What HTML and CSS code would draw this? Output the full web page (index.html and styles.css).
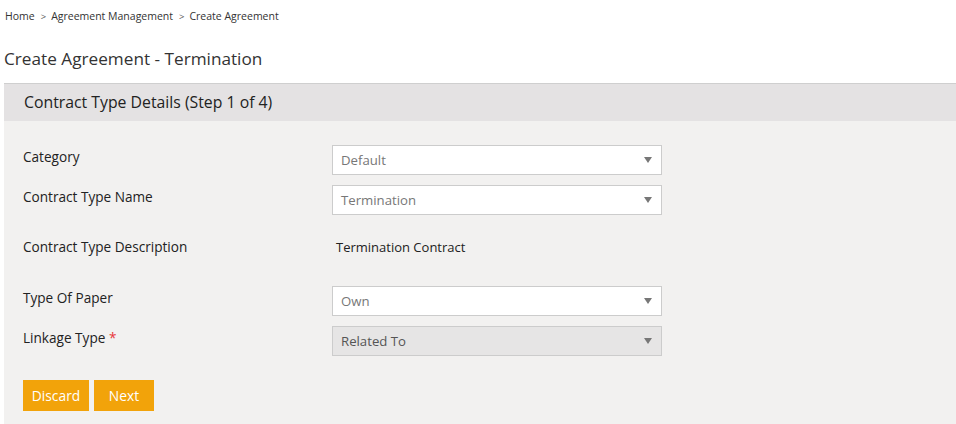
FILE: index.html
```html
<!DOCTYPE html>
<html>
<head>
<meta charset="utf-8">
<link rel="stylesheet" href="styles.css">
</head>
<body>
<div class="breadcrumb">
  <span>Home</span><span class="sep">&gt;</span><span>Agreement Management</span><span class="sep">&gt;</span><span>Create Agreement</span>
</div>
<h1 class="title">Create Agreement - Termination</h1>
<div class="panel">
  <div class="panel-head">Contract Type Details (Step 1 of 4)</div>
  <div class="panel-body">
    <div class="row">
      <div class="label">Category</div>
      <div class="select"><span>Default</span><span class="caret"></span></div>
    </div>
    <div class="row">
      <div class="label">Contract Type Name</div>
      <div class="select"><span>Termination</span><span class="caret"></span></div>
    </div>
    <div class="row desc">
      <div class="label">Contract Type Description</div>
      <div class="value">Termination Contract</div>
    </div>
    <div class="row">
      <div class="label">Type Of Paper</div>
      <div class="select"><span>Own</span><span class="caret"></span></div>
    </div>
    <div class="row">
      <div class="label">Linkage Type <span class="req">*</span></div>
      <div class="select disabled"><span>Related To</span><span class="caret"></span></div>
    </div>
    <div class="actions">
      <button class="btn btn-discard">Discard</button>
      <button class="btn btn-next">Next</button>
    </div>
  </div>
</div>
</body>
</html>
```
FILE: styles.css
```css
html, body {
  margin: 0;
  padding: 0;
  background: #fff;
  font-family: "Open Sans", "Noto Sans", sans-serif;
  color: #333;
}
.breadcrumb {
  font-size: 10.5px;
  line-height: 16px;
  padding: 8px 0 0 5px;
  color: #333;
}
.breadcrumb .sep {
  margin: 0 5px 0 6px;
  color: #555;
  font-size: 9.5px;
}
.title {
  font-size: 17.2px;
  font-weight: 400;
  line-height: 24px;
  margin: 22px 0 0 4px;
  color: #333;
}
.panel {
  margin: 12px 0 0 4px;
  border-top: 1px solid #cfcfcf;
}
.panel-head {
  background: #e4e2e3;
  height: 37px;
  line-height: 37px;
  padding-left: 20px;
  font-size: 15.8px;
  color: #222;
}
.panel-body {
  background: #f2f1f0;
  padding: 24px 0 13px 19px;
}
.row {
  display: flex;
  align-items: flex-start;
  margin-bottom: 10px;
}
.label {
  width: 309px;
  font-size: 13.6px;
  line-height: 20px;
  padding-top: 2px;
  color: #222;
}
.req { color: #e8363a; }
.select {
  box-sizing: border-box;
  width: 330px;
  height: 30px;
  background: #fff;
  border: 1px solid #ccc;
  display: flex;
  align-items: center;
  justify-content: space-between;
  padding: 0 9px 0 8px;
  font-size: 13.2px;
  color: #777;
}
.select.disabled {
  background: #e6e5e5;
  color: #555;
}
.caret {
  width: 0;
  height: 0;
  border-left: 4px solid transparent;
  border-right: 4px solid transparent;
  border-top: 6px solid #777;
}
.row.desc {
  height: 51px;
  padding-top: 12px;
  box-sizing: border-box;
  align-items: flex-start;
}
.row.desc .label { padding-top: 0; }
.value {
  font-size: 13px;
  line-height: 20px;
  padding-left: 4px;
  color: #222;
}
.actions {
  display: flex;
  gap: 5px;
  margin-top: 16px;
  padding-top: 8px;
}
.btn {
  background: #f2a30a;
  border: none;
  color: #fff;
  font-family: inherit;
  font-size: 13.8px;
  height: 31px;
  padding: 0;
  cursor: pointer;
}
.btn-discard { width: 66px; }
.btn-next { width: 60px; }
```
